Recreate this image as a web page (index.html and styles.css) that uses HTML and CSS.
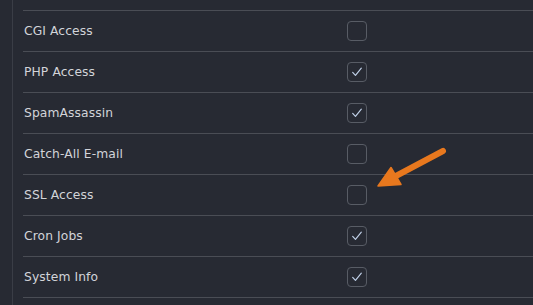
FILE: index.html
```html
<!DOCTYPE html>
<html>
<head>
<meta charset="utf-8">
<link rel="stylesheet" href="styles.css">
</head>
<body>
<div class="page">
  <div class="panel">
    <ul class="perms">
      <li class="row"><span class="label">CGI Access</span><span class="box"></span></li>
      <li class="row"><span class="label">PHP Access</span><span class="box checked"><svg viewBox="0 0 20 20"><path d="M5.2 10.4 L8.3 13.8 L14.8 5.8"/></svg></span></li>
      <li class="row"><span class="label">SpamAssassin</span><span class="box checked"><svg viewBox="0 0 20 20"><path d="M5.2 10.4 L8.3 13.8 L14.8 5.8"/></svg></span></li>
      <li class="row"><span class="label">Catch-All E-mail</span><span class="box"></span></li>
      <li class="row"><span class="label">SSL Access</span><span class="box"></span></li>
      <li class="row"><span class="label">Cron Jobs</span><span class="box checked"><svg viewBox="0 0 20 20"><path d="M5.2 10.4 L8.3 13.8 L14.8 5.8"/></svg></span></li>
      <li class="row"><span class="label">System Info</span><span class="box checked"><svg viewBox="0 0 20 20"><path d="M5.2 10.4 L8.3 13.8 L14.8 5.8"/></svg></span></li>
    </ul>
  </div>
  <svg class="arrow" viewBox="0 0 533 305" width="533" height="305">
    <line x1="443" y1="151" x2="394" y2="177" />
    <polygon points="378,186 391,167.5 401,184.5" />
  </svg>
</div>
</body>
</html>
```
FILE: styles.css
```css
html, body {
  margin: 0;
  padding: 0;
  background: #272a33;
}
body {
  width: 533px;
  height: 305px;
  overflow: hidden;
  font-family: "DejaVu Sans", sans-serif;
}
.page {
  position: relative;
  width: 533px;
  height: 305px;
}
.panel {
  margin-left: 12px;
  border-left: 1px solid #3a3d46;
  height: 305px;
  padding-left: 10px;
  padding-top: 10px;
  box-sizing: border-box;
}
.perms {
  list-style: none;
  margin: 0;
  padding: 0;
  border-top: 1px solid #4a4d55;
}
.row {
  display: grid;
  grid-template-columns: 324px 20px;
  align-items: center;
  height: 40px;
  border-bottom: 1px solid #4a4d55;
}
.label {
  color: #d2d4d9;
  font-size: 12.3px;
  letter-spacing: 0.1px;
  padding-left: 1px;
  margin-top: -1px;
}
.box {
  width: 20px;
  height: 20px;
  box-sizing: border-box;
  border: 1px solid #585c65;
  border-radius: 4px;
  display: flex;
}
.box svg {
  width: 18px;
  height: 18px;
}
.box svg path {
  fill: none;
  stroke: #c0d0e8;
  stroke-width: 1.3;
  stroke-linecap: round;
  stroke-linejoin: round;
}
.arrow {
  position: absolute;
  left: 0;
  top: 0;
}
.arrow line {
  stroke: #e8781e;
  stroke-width: 6;
  stroke-linecap: round;
}
.arrow polygon {
  fill: #e8781e;
  stroke: #e8781e;
  stroke-width: 1.5;
  stroke-linejoin: round;
}
```
